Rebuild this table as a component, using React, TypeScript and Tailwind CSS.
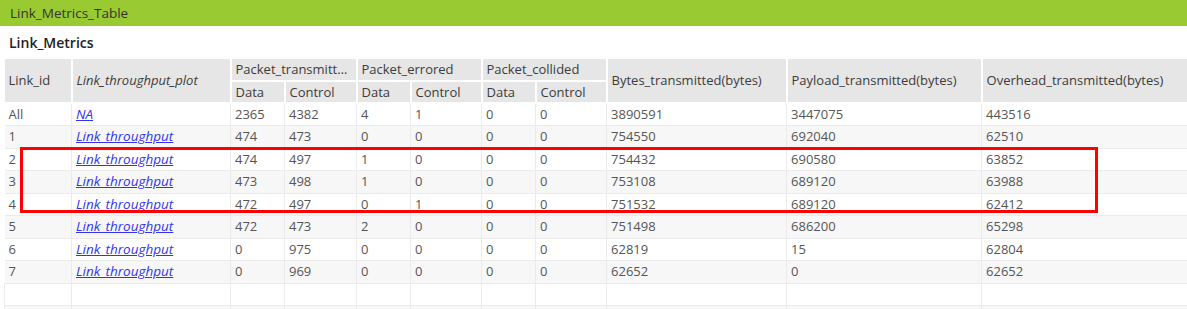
import React from "react";

type Row = {
  id: string;
  plot: string;
  ptData: string;
  ptCtrl: string;
  peData: string;
  peCtrl: string;
  pcData: string;
  pcCtrl: string;
  bytes: string;
  payload: string;
  overhead: string;
};

const ROWS: Row[] = [
  { id: "All", plot: "NA", ptData: "2365", ptCtrl: "4382", peData: "4", peCtrl: "1", pcData: "0", pcCtrl: "0", bytes: "3890591", payload: "3447075", overhead: "443516" },
  { id: "1", plot: "Link_throughput", ptData: "474", ptCtrl: "473", peData: "0", peCtrl: "0", pcData: "0", pcCtrl: "0", bytes: "754550", payload: "692040", overhead: "62510" },
  { id: "2", plot: "Link_throughput", ptData: "474", ptCtrl: "497", peData: "1", peCtrl: "0", pcData: "0", pcCtrl: "0", bytes: "754432", payload: "690580", overhead: "63852" },
  { id: "3", plot: "Link_throughput", ptData: "473", ptCtrl: "498", peData: "1", peCtrl: "0", pcData: "0", pcCtrl: "0", bytes: "753108", payload: "689120", overhead: "63988" },
  { id: "4", plot: "Link_throughput", ptData: "472", ptCtrl: "497", peData: "0", peCtrl: "1", pcData: "0", pcCtrl: "0", bytes: "751532", payload: "689120", overhead: "62412" },
  { id: "5", plot: "Link_throughput", ptData: "472", ptCtrl: "473", peData: "2", peCtrl: "0", pcData: "0", pcCtrl: "0", bytes: "751498", payload: "686200", overhead: "65298" },
  { id: "6", plot: "Link_throughput", ptData: "0", ptCtrl: "975", peData: "0", peCtrl: "0", pcData: "0", pcCtrl: "0", bytes: "62819", payload: "15", overhead: "62804" },
  { id: "7", plot: "Link_throughput", ptData: "0", ptCtrl: "969", peData: "0", peCtrl: "0", pcData: "0", pcCtrl: "0", bytes: "62652", payload: "0", overhead: "62652" },
];

const WIDTHS = [67, 159, 54, 72, 54, 71, 54, 71, 180, 195, 206];

const th = "bg-[#e6e6e6] border-2 border-white px-[4px] h-[22px] text-left font-normal text-[#3c3c3c] whitespace-nowrap overflow-hidden text-ellipsis";
const td = "border border-[#ebebeb] px-[4px] h-[22.5px] text-[#555] whitespace-nowrap overflow-hidden";

export default function App() {
  return (
    <div className="w-[1187px] h-[309px] bg-white overflow-hidden relative" style={{ fontFamily: '"Open Sans", "Noto Sans", sans-serif' }}>
      <div className="h-[26px] bg-[#9aca32] flex items-center pl-[10px] text-[13.5px] text-[#333]">
        Link_Metrics_Table
      </div>
      <div className="h-[33px] flex items-center pl-[9px] text-[14px] font-semibold text-[#222]">Link_Metrics</div>
      <div className="pl-[4px]">
        <table className="table-fixed border-collapse text-[13px] leading-none w-[1183px]">
          <colgroup>
            {WIDTHS.map((w, i) => (
              <col key={i} style={{ width: w }} />
            ))}
          </colgroup>
          <thead>
            <tr>
              <th rowSpan={2} className={th + " border-l-0 border-t-0"}>Link_id</th>
              <th rowSpan={2} className={th + " italic border-t-0"}>Link_throughput_plot</th>
              <th colSpan={2} className={th + " border-t-0"}>Packet_transmitted</th>
              <th colSpan={2} className={th + " border-t-0"}>Packet_errored</th>
              <th colSpan={2} className={th + " border-t-0"}>Packet_collided</th>
              <th rowSpan={2} className={th + " border-t-0"}>Bytes_transmitted(bytes)</th>
              <th rowSpan={2} className={th + " border-t-0"}>Payload_transmitted(bytes)</th>
              <th rowSpan={2} className={th + " border-t-0 border-r-0"}>Overhead_transmitted(bytes)</th>
            </tr>
            <tr>
              <th className={th}>Data</th>
              <th className={th}>Control</th>
              <th className={th}>Data</th>
              <th className={th}>Control</th>
              <th className={th}>Data</th>
              <th className={th}>Control</th>
            </tr>
          </thead>
          <tbody>
            {ROWS.map((r, i) => (
              <tr key={r.id} className={i % 2 === 1 ? "bg-[#f7f7f7]" : "bg-white"}>
                <td className={td + " border-l-0"}>{r.id}</td>
                <td className={td}>
                  <span className="italic underline text-[13.5px] text-[#3333ee] decoration-[#3333ee]">{r.plot}</span>
                </td>
                <td className={td}>{r.ptData}</td>
                <td className={td}>{r.ptCtrl}</td>
                <td className={td}>{r.peData}</td>
                <td className={td}>{r.peCtrl}</td>
                <td className={td}>{r.pcData}</td>
                <td className={td}>{r.pcCtrl}</td>
                <td className={td}>{r.bytes}</td>
                <td className={td}>{r.payload}</td>
                <td className={td + " border-r-0"}>{r.overhead}</td>
              </tr>
            ))}
            <tr className="bg-white">
              {WIDTHS.map((_, i) => (
                <td key={i} className={td}>&nbsp;</td>
              ))}
            </tr>
            <tr className="bg-[#f7f7f7]">
              {WIDTHS.map((_, i) => (
                <td key={i} className={td}>&nbsp;</td>
              ))}
            </tr>
          </tbody>
        </table>
      </div>
      <div className="absolute left-[20px] top-[147px] w-[1078px] h-[66px] border-[3px] border-[#ff0000] pointer-events-none" />
    </div>
  );
}
